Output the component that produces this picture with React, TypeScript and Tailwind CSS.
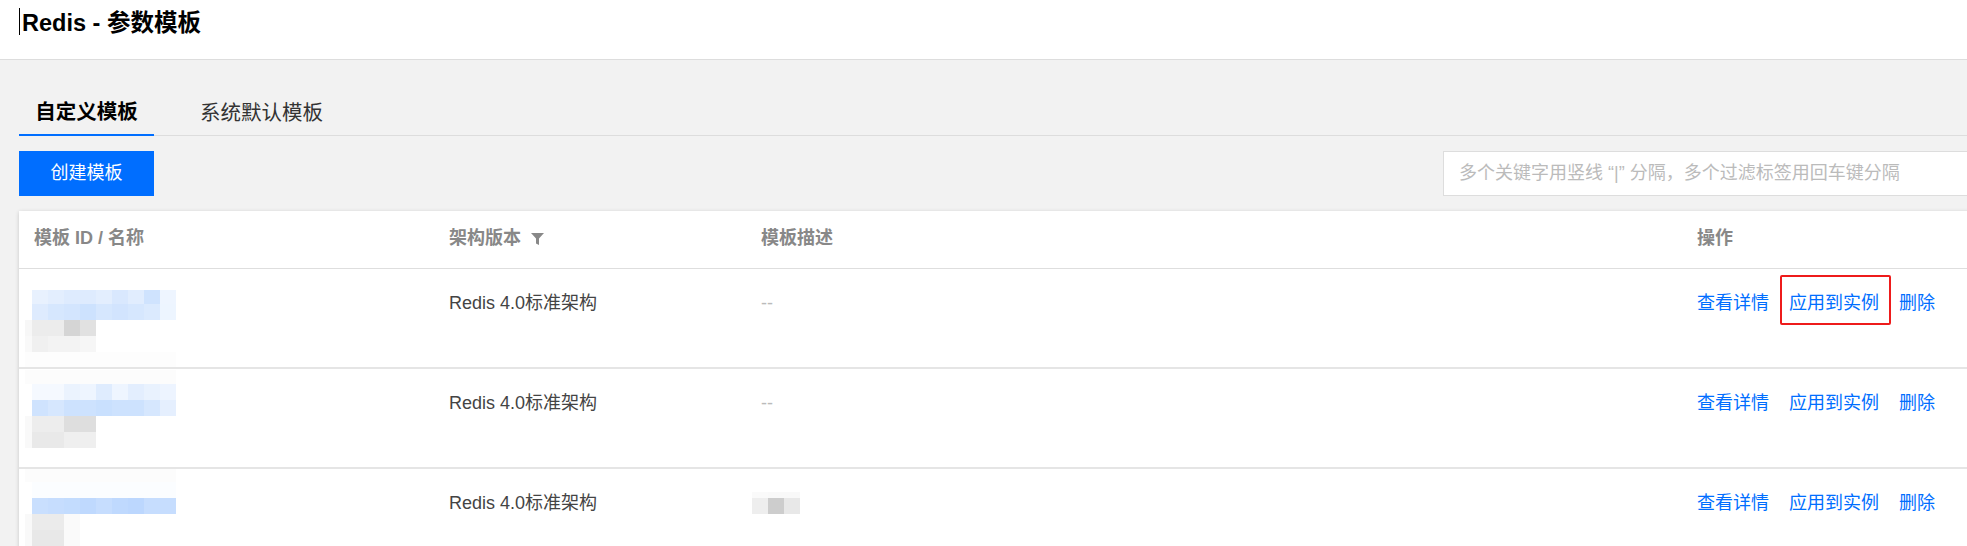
import React from "react";

type MosaicRow = { h: string; lead?: string; cells: string[] };

const FAINT9 = (c: string) => Array(9).fill(c) as string[];

const rows: {
  id: MosaicRow[];
  idTop: string;
  desc: MosaicRow[] | null;
  highlight?: boolean;
}[] = [
  {
    idTop: "mt-[21px]",
    highlight: true,
    id: [
      {
        h: "h-[14px]",
        cells: ["bg-[#e8f1fe]", "bg-[#e3eefe]", "bg-[#deebfe]", "bg-[#deebfe]", "bg-[#e3eefe]", "bg-[#d9e8fe]", "bg-[#e1edfe]", "bg-[#cfe3fe]", "bg-[#eef5ff]"],
      },
      {
        h: "h-[16px]",
        cells: ["bg-[#deebfe]", "bg-[#d6e7fe]", "bg-[#d3e5fe]", "bg-[#cde2fe]", "bg-[#d6e7fe]", "bg-[#d2e4fe]", "bg-[#d6e7fe]", "bg-[#dbeafe]", "bg-[#edf5ff]"],
      },
      { h: "h-[16px]", lead: "bg-[#f7f7f7]", cells: ["bg-[#ececec]", "bg-[#ececec]", "bg-[#d5d5d5]", "bg-[#e1e1e1]"] },
      { h: "h-[16px]", lead: "bg-[#f9f9f9]", cells: ["bg-[#f0f0f0]", "bg-[#f3f3f3]", "bg-[#f3f3f3]", "bg-[#f6f6f6]"] },
      { h: "h-[15px]", lead: "bg-[#fdfdfd]", cells: FAINT9("bg-[#fdfdfd]") },
    ],
    desc: null,
  },
  {
    idTop: "mt-[1px]",
    id: [
      { h: "h-[14px]", lead: "bg-[#fcfcfc]", cells: FAINT9("bg-[#fcfcfc]") },
      {
        h: "h-[16px]",
        cells: ["bg-[#f5f9ff]", "bg-[#f5f9ff]", "bg-[#ebf3fe]", "bg-[#eef5ff]", "bg-[#dfecfe]", "bg-[#eef5ff]", "bg-[#e3eefe]", "bg-[#e9f2fe]", "bg-[#edf4ff]"],
      },
      {
        h: "h-[16px]",
        cells: ["bg-[#cfe3fe]", "bg-[#d6e7fe]", "bg-[#cde2fe]", "bg-[#cde2fe]", "bg-[#c9e0fe]", "bg-[#cde2fe]", "bg-[#cde2fe]", "bg-[#d6e7fe]", "bg-[#e5effe]"],
      },
      { h: "h-[16px]", lead: "bg-[#f9f9f9]", cells: ["bg-[#ededed]", "bg-[#ededed]", "bg-[#dedede]", "bg-[#dedede]"] },
      { h: "h-[16px]", lead: "bg-[#f9f9f9]", cells: ["bg-[#e9e9e9]", "bg-[#e9e9e9]", "bg-[#efefef]", "bg-[#efefef]"] },
    ],
    desc: null,
  },
  {
    idTop: "mt-0",
    id: [
      { h: "h-[13px]", lead: "bg-[#fcfcfc]", cells: FAINT9("bg-[#fcfcfc]") },
      { h: "h-[16px]", cells: FAINT9("bg-[#fbfdff]") },
      {
        h: "h-[16px]",
        cells: ["bg-[#c9dffe]", "bg-[#c6ddfe]", "bg-[#c3dcfe]", "bg-[#bfd9fe]", "bg-[#c6ddfe]", "bg-[#bfd9fe]", "bg-[#bcd7fe]", "bg-[#c6ddfe]", "bg-[#c6ddfe]"],
      },
      { h: "h-[16px]", lead: "bg-[#f9f9f9]", cells: ["bg-[#ebebeb]", "bg-[#ebebeb]", "bg-[#fafafa]"] },
      { h: "h-[16px]", lead: "bg-[#f9f9f9]", cells: ["bg-[#e8e8e8]", "bg-[#e8e8e8]", "bg-[#fafafa]"] },
    ],
    desc: [
      { h: "h-[6px]", cells: ["bg-[#fafafa]", "bg-[#f9f9f9]", "bg-[#f9f9f9]"] },
      { h: "h-[16px]", cells: ["bg-[#eeeeee]", "bg-[#cdcdcd]", "bg-[#e8e8e8]"] },
    ],
  },
];

function Mosaic({ data, lead = true }: { data: MosaicRow[]; lead?: boolean }) {
  return (
    <div className="flex flex-col">
      {data.map((r, i) => (
        <div key={i} className={`flex ${r.h}`}>
          {lead && <div className={`w-[7px] ${r.lead ?? ""}`} />}
          {r.cells.map((c, j) => (
            <div key={j} className={`w-[16px] ${c}`} />
          ))}
        </div>
      ))}
    </div>
  );
}

function FilterIcon() {
  return (
    <svg width="13" height="12" viewBox="0 0 13 12" className="ml-[10px] fill-[#888]">
      <path d="M0 0H13L8 5.4V12L5 10.5V5.4Z" />
    </svg>
  );
}

export default function App() {
  return (
    <div className="min-h-[546px] w-full overflow-hidden bg-[#f2f2f2] font-['Liberation_Sans','Noto_Sans_CJK_SC',sans-serif]">
      {/* Page header */}
      <div className="flex h-[60px] items-start border-b border-[#dddddd] bg-white pl-[19px]">
        <span className="mt-[8px] h-[27px] w-px bg-black" />
        <h1 className="ml-[2px] mt-[8px] text-[23.5px] font-bold leading-[30px] text-black">Redis - 参数模板</h1>
      </div>

      <div className="w-[2003px] pl-[19px]">
        {/* Tabs */}
        <div className="mt-[31px] flex h-[45px] border-b border-[#dddddd]">
          <div className="flex h-[45px] w-[135px] items-center justify-center border-b-2 border-[#006eff] text-[20.5px] font-bold text-black">
            自定义模板
          </div>
          <div className="ml-[30px] flex h-[44px] items-center px-[16px] text-[20.5px] text-[#333]">系统默认模板</div>
        </div>

        {/* Toolbar */}
        <div className="mt-[15px] flex h-[45px] items-center">
          <button className="flex h-[45px] w-[135px] items-center justify-center bg-[#006eff] text-[18px] text-white">
            创建模板
          </button>
          <div className="ml-auto flex h-[45px] w-[560px] items-center border border-[#dddddd] bg-white pl-[15px] text-[18px] text-[#bbbbbb]">
            多个关键字用竖线 “|” 分隔，多个过滤标签用回车键分隔
          </div>
        </div>

        {/* Table */}
        <div className="mt-[15px] bg-white shadow-[0_1px_4px_rgba(0,0,0,0.18)]">
          <div className="grid h-[58px] grid-cols-[430px_312px_936px_1fr] items-center border-b border-[#dedede] text-[18px] font-bold text-[#888888]">
            <div className="pl-[15px] pb-[2px]">模板 ID / 名称</div>
            <div className="flex items-center pb-[2px]">
              架构版本
              <FilterIcon />
            </div>
            <div className="pb-[2px]">模板描述</div>
            <div className="pb-[2px]">操作</div>
          </div>

          {rows.map((row, i) => (
            <div
              key={i}
              className="grid h-[100px] grid-cols-[430px_312px_936px_1fr] border-b-2 border-[#e5e5e5] text-[18px] leading-[24px]"
            >
              <div className="pl-[6px]">
                <div className={row.idTop}>
                  <Mosaic data={row.id} />
                </div>
              </div>
              <div className="pt-[22px] text-[#444444]">Redis 4.0标准架构</div>
              <div>
                {row.desc ? (
                  <div className="-ml-[9px] mt-[23px]">
                    <Mosaic data={row.desc} lead={false} />
                  </div>
                ) : (
                  <div className="pt-[22px] text-[#bbbbbb]">--</div>
                )}
              </div>
              <div className="flex items-start gap-[20px] pt-[22px] text-[#006eff]">
                <a>查看详情</a>
                <span className="relative">
                  应用到实例
                  {row.highlight && (
                    <span className="absolute -left-[9px] -right-[12px] -top-[16px] -bottom-[10px] rounded-[2px] border-2 border-[#ee1b1b]" />
                  )}
                </span>
                <a>删除</a>
              </div>
            </div>
          ))}
        </div>
      </div>
    </div>
  );
}
